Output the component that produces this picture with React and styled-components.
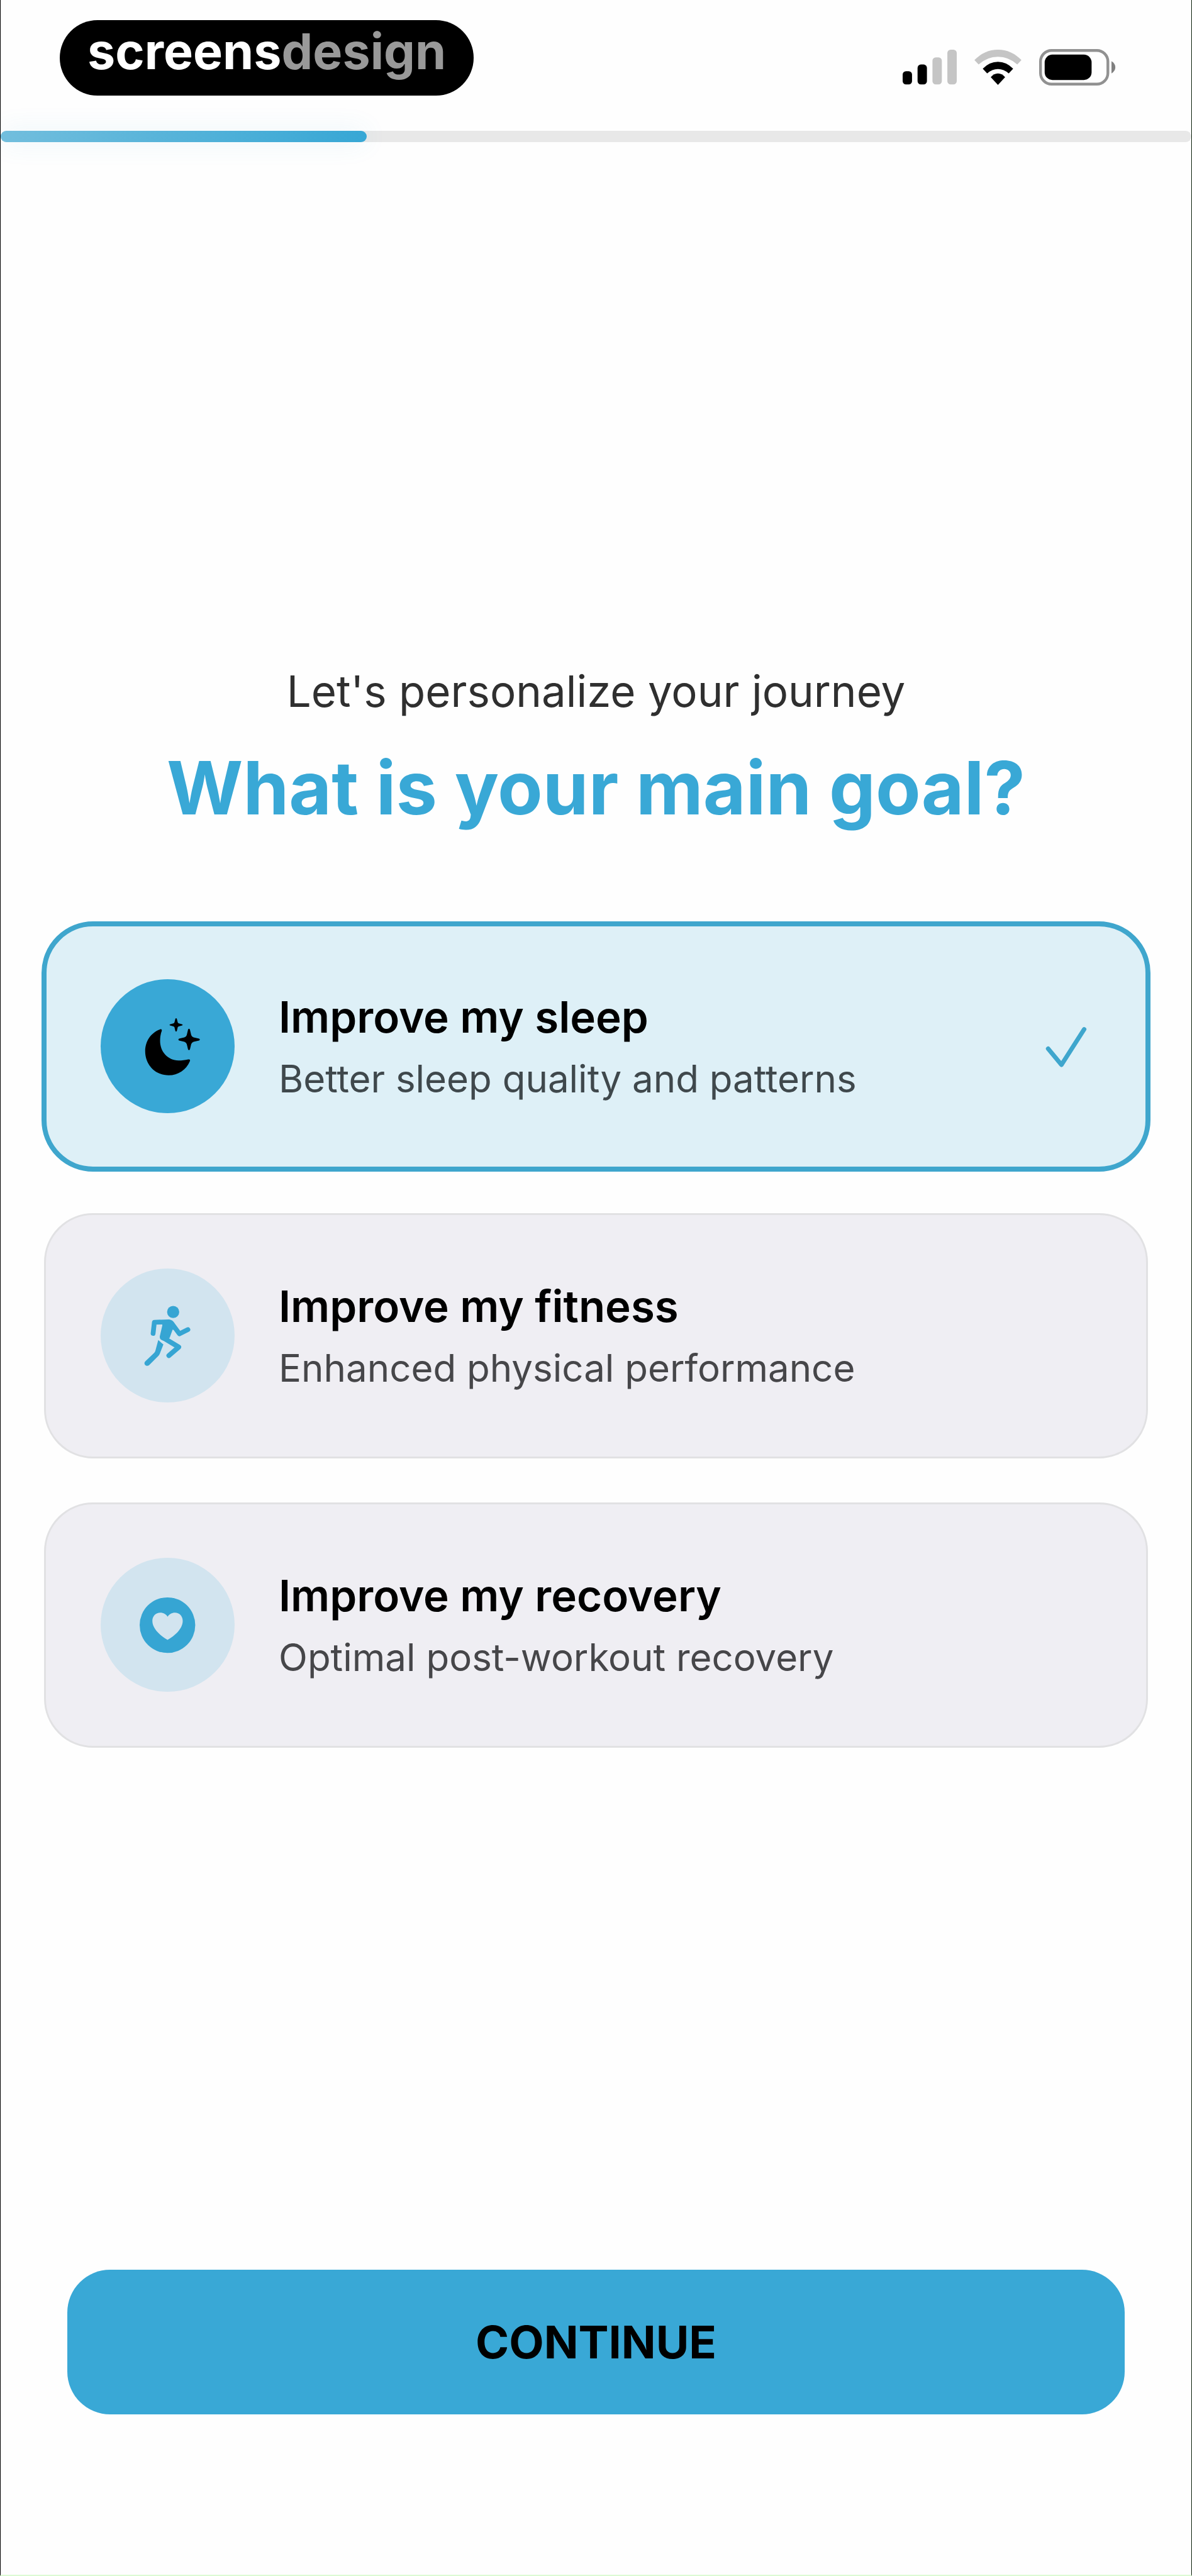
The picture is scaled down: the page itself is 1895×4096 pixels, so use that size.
import React, { useState } from "react";
import styled, { createGlobalStyle, css } from "styled-components";

const GlobalStyle = createGlobalStyle`
  * {
    box-sizing: border-box;
  }
  body {
    margin: 0;
    background: #fefefe;
    font-family: "Inter", "Liberation Sans", sans-serif;
  }
`;
const Screen = styled.div`
  min-height: 100vh;
  display: flex;
  flex-direction: column;
  background: #fefefe;
  border-left: 1px solid #000000;
  border-right: 1px solid #0b1f0b;
  border-bottom: 2px solid #dcfbd4;
`;
const StatusBar = styled.header`
  display: flex;
  justify-content: space-between;
  align-items: flex-start;
  padding: 32px 120px 56px 94px;
`;
const Brand = styled.div`
  height: 120px;
  padding: 0 44px;
  border-radius: 60px;
  background: #000000;
  color: #ffffff;
  font-weight: 700;
  font-size: 79px;
  line-height: 98px;
`;
const BrandLight = styled.span`
  color: #999999;
`;
const StatusIcons = styled.div`
  display: flex;
  gap: 28px;
  padding-top: 46px;

  svg {
    display: block;
    height: 58px;
  }
`;
const Track = styled.div`
  height: 18px;
  border-radius: 9px;
  background: #e8e8e8;
`;
const TrackFill = styled.div`
  height: 18px;
  border-radius: 9px;
  background: linear-gradient(90deg, #72bedd 0%, #37a7d5 100%);
  box-shadow: 0 0 40px rgba(57, 168, 214, 0.12);
`;
const Main = styled.main`
  flex: 1;
  display: flex;
  flex-direction: column;
  justify-content: center;
  padding: 0 69px;
`;
const Lead = styled.p`
  margin: 0;
  font-weight: 400;
  font-size: 69px;
  line-height: 84px;
  text-align: center;
  color: #2f2f2f;
`;
const Title = styled.h1`
  margin: 40px 0 144px;
  font-weight: 700;
  font-size: 117px;
  line-height: 144px;
  text-align: center;
  color: #39a8d6;
`;
const Goals = styled.fieldset`
  min-width: 0;
  margin: 0;
  padding: 0;
  border: none;
  display: flex;
  flex-direction: column;
  gap: 70px;
`;
const GoalCard = styled.label`
  position: relative;
  display: flex;
  align-items: center;
  height: 390px;
  padding: 0 87px;
  border: 3px solid #e1e1e3;
  border-radius: 78px;
  background: #efeef3;
  cursor: pointer;

  ${({ $selected }) =>
    $selected &&
    css`
      background: #def0f7;
      border-color: #3fa6cd;
      outline: 8px solid #3fa6cd;
      outline-offset: -4px;
    `}
`;
const Radio = styled.input`
  position: absolute;
  inset: 0;
  margin: 0;
  appearance: none;
  cursor: pointer;
`;
const IconCircle = styled.span`
  flex: none;
  width: 213px;
  height: 213px;
  border-radius: 50%;
  color: ${({ $selected }) => ($selected ? "#000000" : "#36a5d3")};
  background: ${({ $selected }) => ($selected ? "#39a8d6" : "#d2e4ef")};

  svg {
    display: block;
    width: 100%;
    height: 100%;
  }
`;
const GoalText = styled.span`
  flex: 1;
  display: flex;
  flex-direction: column;
  gap: 14px;
  margin-left: 70px;
  padding-top: 4px;
`;
const GoalName = styled.span`
  font-weight: 600;
  font-size: 69px;
  line-height: 84px;
  color: #000000;
`;
const GoalHint = styled.span`
  font-weight: 400;
  font-size: 60px;
  line-height: 84px;
  color: ${({ $selected }) => ($selected ? "#3f484c" : "#464649")};
`;
const Footer = styled.footer`
  padding: 0 106px 255px;
`;
const ContinueBtn = styled.button`
  display: block;
  width: 100%;
  height: 230px;
  border: none;
  border-radius: 68px;
  background: #39a8d6;
  font-family: inherit;
  font-weight: 700;
  font-size: 72px;
  line-height: 88px;
  color: #000000;
  cursor: pointer;
`;

const SignalIcon = () => (
  <svg width="86" height="58" viewBox="0 0 98 66" aria-hidden="true">
    <rect x="0" y="40" width="17" height="24" rx="6" />
    <rect x="27" y="28" width="17" height="36" rx="6" />
    <rect x="54" y="15" width="17" height="49" rx="6" fill="#c5c5c5" />
    <rect x="81" y="1" width="17" height="63" rx="6" fill="#c5c5c5" />
  </svg>
);

const WifiIcon = () => (
  <svg width="75" height="58" viewBox="0 0 85 66" aria-hidden="true">
    <path
      d="M0 20 Q18 1 42.500 1 Q67 1 85 20 L77.500 28 Q62 14 42.500 14 Q23 14 7.500 28Z"
      fill="#c5c5c5"
    />
    <path d="M15 35.500 Q27 23 42.500 23 Q58 23 70 35.500 L62 44 Q53 36 42.500 36 Q32 36 23 44Z" />
    <path d="M29.500 51 Q35 44 42.500 44 Q50 44 55.500 51 L42.500 65Z" />
  </svg>
);

const BatteryIcon = () => (
  <svg width="122" height="58" viewBox="0 0 139 66" aria-hidden="true">
    <rect
      x="2.5"
      y="2.5"
      width="122"
      height="61"
      rx="20"
      fill="none"
      stroke="#919191"
      strokeWidth="5"
    />
    <rect x="10" y="10" width="85" height="46" rx="14" />
    <path d="M131 22 Q138 26 138 33 Q138 40 131 44Z" fill="#808080" />
  </svg>
);

const MoonIcon = () => (
  <svg viewBox="67 105 728 728" fill="currentColor" aria-hidden="true">
    <path d="M388 378C340 396 309 442 309 496C309 570 364 627 437 627C488 627 532 598 552 550C555 543 550 539 543 541C525 545 510 547 490 547C432 545 390 500 390 440C390 420 393 402 399 386C401 378 396 375 388 378Z" />
    <path d="M473 320Q477 313 481 320L486 340Q488 344 492 345L510 350Q516 353 510 356L492 361Q488 362 486 366L481 386Q477 393 473 386L468 366Q466 362 462 361L444 356Q438 353 444 350L462 345Q466 344 468 340Z" />
    <path d="M542 378Q547 371 552 378L559 408Q562 418 572 421L602 428Q610 433 602 438L572 445Q562 448 559 458L552 487Q547 494 542 487L535 458Q532 448 522 445L493 438Q486 433 493 428L522 421Q532 418 535 408Z" />
  </svg>
);

const RunnerIcon = () => (
  <svg viewBox="67 88 728 728" fill="currentColor" aria-hidden="true">
    <circle cx="461" cy="324" r="33" />
    <path d="M402 368H440Q456 370 464 384L480 424L458 420L442 465L410 480Q384 474 389 454L402 398Z" />
    <path
      d="M352 441L359 380L438 378Q450 380 457 391L495 443L541 420"
      fill="none"
      stroke="currentColor"
      strokeWidth="26"
      strokeLinecap="round"
      strokeLinejoin="round"
    />
    <path
      d="M404 464L413 468L491 515L438 561"
      fill="none"
      stroke="currentColor"
      strokeWidth="27"
      strokeLinecap="round"
      strokeLinejoin="round"
    />
    <path d="M380 477L408 501L388 552Q385 559 379 565L331 613Q319 622 308 612Q301 601 310 592L354 550Q362 544 364 537Z" />
  </svg>
);

const HeartIcon = () => (
  <svg viewBox="67 70 728 728" fill="currentColor" aria-hidden="true">
    <circle cx="430" cy="436" r="151" />
    <path
      d="M431 516C405 502 348 462 348 413C348 385 368 368 391 368C408 368 423 377 431 390C439 377 454 368 471 368C494 368 513 385 513 413C513 462 457 502 431 516Z"
      fill="#d2e4ef"
    />
  </svg>
);

const CheckIcon = () => (
  <svg width="74" height="74" viewBox="0 0 84 84" fill="none" aria-hidden="true">
    <path
      d="M6 46L30 75L71 11"
      stroke="#3fa6cd"
      strokeWidth="8"
      strokeLinecap="round"
      strokeLinejoin="round"
    />
  </svg>
);

const goals = [
  {
    id: "sleep",
    name: "Improve my sleep",
    hint: "Better sleep quality and patterns",
    Icon: MoonIcon,
  },
  {
    id: "fitness",
    name: "Improve my fitness",
    hint: "Enhanced physical performance",
    Icon: RunnerIcon,
  },
  {
    id: "recovery",
    name: "Improve my recovery",
    hint: "Optimal post-workout recovery",
    Icon: HeartIcon,
  },
];

const STEP = 4;
const STEP_COUNT = 13;

const App = () => {
  const [goal, setGoal] = useState("sleep");

  return (
    <>
      <GlobalStyle />
      <Screen>
        <StatusBar>
          <Brand>
            screens<BrandLight>design</BrandLight>
          </Brand>
          <StatusIcons>
            <SignalIcon />
            <WifiIcon />
            <BatteryIcon />
          </StatusIcons>
        </StatusBar>
        <Track
          role="progressbar"
          aria-label="Setup progress"
          aria-valuenow={STEP}
          aria-valuemin={0}
          aria-valuemax={STEP_COUNT}
        >
          <TrackFill style={{ width: `${(STEP / STEP_COUNT) * 100}%` }} />
        </Track>

        <Main>
          <Lead>Let's personalize your journey</Lead>
          <Title id="goal-title">What is your main goal?</Title>
          <Goals aria-labelledby="goal-title">
            {goals.map(({ id, name, hint, Icon }) => {
              const selected = goal === id;
              return (
                <GoalCard key={id} htmlFor={id} $selected={selected}>
                  <Radio
                    type="radio"
                    name="goal"
                    id={id}
                    checked={selected}
                    onChange={() => setGoal(id)}
                  />
                  <IconCircle $selected={selected}>
                    <Icon />
                  </IconCircle>
                  <GoalText>
                    <GoalName>{name}</GoalName>
                    <GoalHint $selected={selected}>{hint}</GoalHint>
                  </GoalText>
                  {selected && <CheckIcon />}
                </GoalCard>
              );
            })}
          </Goals>
        </Main>

        <Footer>
          <ContinueBtn type="button">CONTINUE</ContinueBtn>
        </Footer>
      </Screen>
    </>
  );
};

export default App;
